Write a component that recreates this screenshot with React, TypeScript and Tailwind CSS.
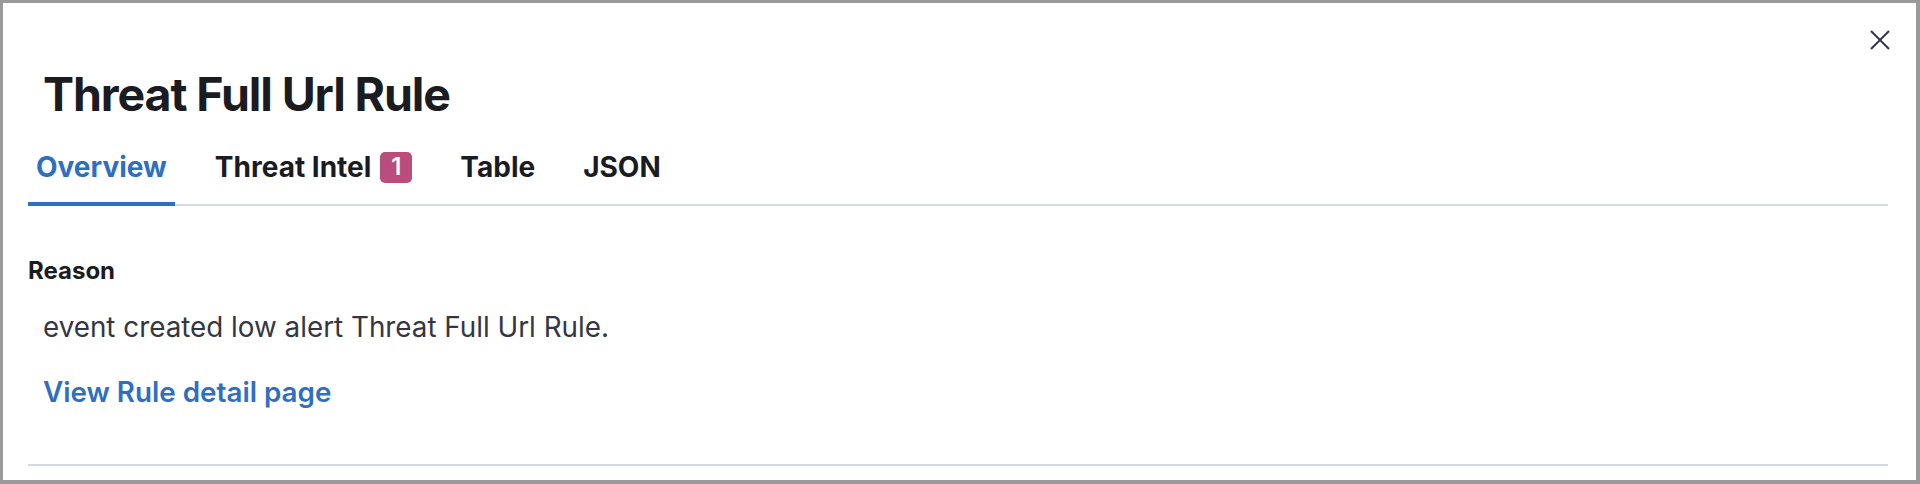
import React from "react";

export default function App() {
  const tabs = [
    { label: "Overview", active: true },
    { label: "Threat Intel", badge: "1" },
    { label: "Table" },
    { label: "JSON" },
  ];
  return (
    <div
      className="relative h-[484px] w-full bg-white border-[#9a9a9a] border-t-[3px] border-l-[3px] border-r-[4px] border-b-[4px] overflow-hidden"
      style={{ fontFamily: "Inter, 'Noto Sans', sans-serif" }}
    >
      <button
        aria-label="Close"
        className="absolute top-[27px] right-[26px] flex h-[20px] w-[20px] items-center justify-center text-[#343741]"
      >
        <svg width="20" height="20" viewBox="0 0 20 20" fill="none">
          <path d="M1 1L19 19M19 1L1 19" stroke="currentColor" strokeWidth="2" />
        </svg>
      </button>
      <div className="pl-[25px] pr-[28px] pt-[63px]">
        <h1 className="pl-[15px] text-[46.5px] leading-[56px] font-bold text-[#1a1c21] tracking-[-1.1px]">
          Threat Full Url Rule
        </h1>
        <div className="mt-[28px] flex gap-[32px] border-b-2 border-[#d3dae6]">
          {tabs.map((t) => (
            <div
              key={t.label}
              className={
                "relative flex items-center gap-[9px] px-[8px] pb-[20px] text-[28px] leading-[34px] font-bold " +
                (t.active ? "text-[#2f6fc2]" : "text-[#1a1c21]")
              }
            >
              <span>{t.label}</span>
              {t.badge && (
                <span className="flex h-[31px] w-[32px] items-center justify-center rounded-[5px] bg-[#b94d7b] text-[24px] font-semibold leading-none text-white">
                  {t.badge}
                </span>
              )}
              {t.active && (
                <span className="absolute left-0 right-0 bottom-[-2px] h-[4px] bg-[#2f6fc2]" />
              )}
            </div>
          ))}
        </div>
        <div className="pt-[50px]">
          <div className="text-[24px] leading-[29px] font-bold text-[#1a1c21]">Reason</div>
          <div className="pl-[15px] pt-[25px] text-[27.8px] leading-[34px] text-[#343741]">
            event created low alert Threat Full Url Rule.
          </div>
          <div className="pl-[15px] pt-[31px] text-[27.8px] leading-[34px] font-semibold text-[#2f6fc2]">
            View Rule detail page
          </div>
        </div>
        <div className="mt-[55px] h-[2px] bg-[#d3dae6]" />
      </div>
    </div>
  );
}
